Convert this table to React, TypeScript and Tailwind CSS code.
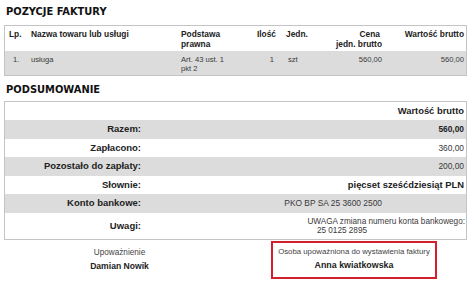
import React from "react";

const F = { fontFamily: '"Liberation Sans", Arial, sans-serif' };

export default function App() {
  const h = "text-[8.4px] font-bold text-[#222] leading-[9.5px]";
  const d = "text-[7.6px] text-[#3a3a3a] leading-[8.5px]";
  const lbl = "text-[9.5px] font-bold text-[#222] text-right pr-[4px]";
  return (
    <div className="w-[474px] h-[284px] overflow-hidden bg-white flex flex-col" style={F}>
      <div className="h-[25px] pl-[6px] pt-[5px] text-[11px] font-bold text-[#111] leading-[13px]" style={{ fontFamily: '"DejaVu Sans Condensed", "DejaVu Sans", sans-serif', fontStretch: "condensed" }}>
        POZYCJE FAKTURY
      </div>
      <div className="mx-[4px] w-[463px] border border-[#c4c4c4]">
        <div className="grid grid-cols-[22px_149px_74px_30px_40px_65px_81px] h-[25px] pt-[4px]">
          <div className={`${h} pl-[4px]`}>Lp.</div>
          <div className={`${h} pl-[4px]`}>Nazwa towaru lub usługi</div>
          <div className={`${h} pl-[5px]`}>Podstawa<br />prawna</div>
          <div className={`${h} text-right pr-[4px]`}>Ilość</div>
          <div className={`${h} pl-[6px]`}>Jedn.</div>
          <div className={`${h} text-right pr-[3px]`}>
            <div className="pr-[2px]">Cena</div>
            <div>jedn. brutto</div>
          </div>
          <div className={`${h} text-right pr-[2px]`}>Wartość brutto</div>
        </div>
        <div className="grid grid-cols-[22px_149px_74px_30px_40px_65px_81px] h-[24px] pt-[5px] bg-[#dcdcdc]">
          <div className={`${d} pl-[8px]`}>1.</div>
          <div className={`${d} pl-[4px]`}>usługa</div>
          <div className={`${d} pl-[5px]`}>Art. 43 ust. 1<br />pkt 2</div>
          <div className={`${d} text-right pr-[6px]`}>1</div>
          <div className={`${d} pl-[8px]`}>szt</div>
          <div className={`${d} text-right pr-[3px]`}>560,00</div>
          <div className={`${d} text-right pr-[2px]`}>560,00</div>
        </div>
      </div>
      <div className="h-[25px] pl-[6px] pt-[7px] text-[11px] font-bold text-[#111] leading-[13px]" style={{ fontFamily: '"DejaVu Sans Condensed", "DejaVu Sans", sans-serif', fontStretch: "condensed" }}>
        PODSUMOWANIE
      </div>
      <div className="mx-[4px] w-[463px] border border-[#c4c4c4] flex flex-col">
        <div className="h-[18px] flex items-center justify-end pr-[2px] text-[9.4px] font-bold text-[#222]">Wartość brutto</div>
        <div className="h-[19px] flex items-center bg-[#dcdcdc]">
          <div className={`w-[140px] ${lbl}`}>Razem:</div>
          <div className="flex-1 text-right pr-[2px] text-[8.4px] font-bold text-[#222]">560,00</div>
        </div>
        <div className="h-[18px] flex items-center">
          <div className={`w-[140px] ${lbl}`}>Zapłacono:</div>
          <div className="flex-1 text-right pr-[2px] text-[8.4px] text-[#3a3a3a]">360,00</div>
        </div>
        <div className="h-[19px] flex items-center bg-[#dcdcdc]">
          <div className={`w-[140px] ${lbl}`}>Pozostało do zapłaty:</div>
          <div className="flex-1 text-right pr-[2px] text-[8.4px] text-[#3a3a3a]">200,00</div>
        </div>
        <div className="h-[18px] flex items-center">
          <div className={`w-[140px] ${lbl}`}>Słownie:</div>
          <div className="flex-1 text-right pr-[2px] text-[9.4px] font-bold text-[#222]">pięcset sześćdziesiąt PLN</div>
        </div>
        <div className="h-[19px] flex items-center bg-[#dcdcdc]">
          <div className={`w-[140px] ${lbl}`}>Konto bankowe:</div>
          <div className="flex-1 text-right pr-[84px] text-[8.4px] text-[#3a3a3a]">PKO BP SA 25 3600 2500</div>
        </div>
        <div className="h-[26px] flex items-center">
          <div className={`w-[140px] ${lbl}`}>Uwagi:</div>
          <div className="flex-1 flex flex-col items-end pr-[1px] text-[8.2px] text-[#3a3a3a] leading-[9.5px]">
            <div>UWAGA zmiana numeru konta bankowego:</div>
            <div className="pr-[98px]">25 0125 2895</div>
          </div>
        </div>
      </div>
      <div className="mx-[4px] w-[463px] flex pt-[1px]">
        <div className="w-[231px] flex flex-col items-center pt-[7px]">
          <div className="text-[8.2px] text-[#444] leading-[10px]">Upoważnienie</div>
          <div className="text-[8.6px] font-bold text-[#222] leading-[10px] mt-[3px]">Damian Nowik</div>
        </div>
        <div className="flex-1 flex justify-center">
          <div className="w-[166px] h-[38px] border-2 border-[#d3202e] flex flex-col items-center pt-[4px] ml-[6px]">
            <div className="text-[7.8px] text-[#444] leading-[10px]">Osoba upoważniona do wystawienia faktury</div>
            <div className="text-[8.9px] font-bold text-[#222] leading-[10px] mt-[3px]">Anna kwiatkowska</div>
          </div>
        </div>
      </div>
    </div>
  );
}
